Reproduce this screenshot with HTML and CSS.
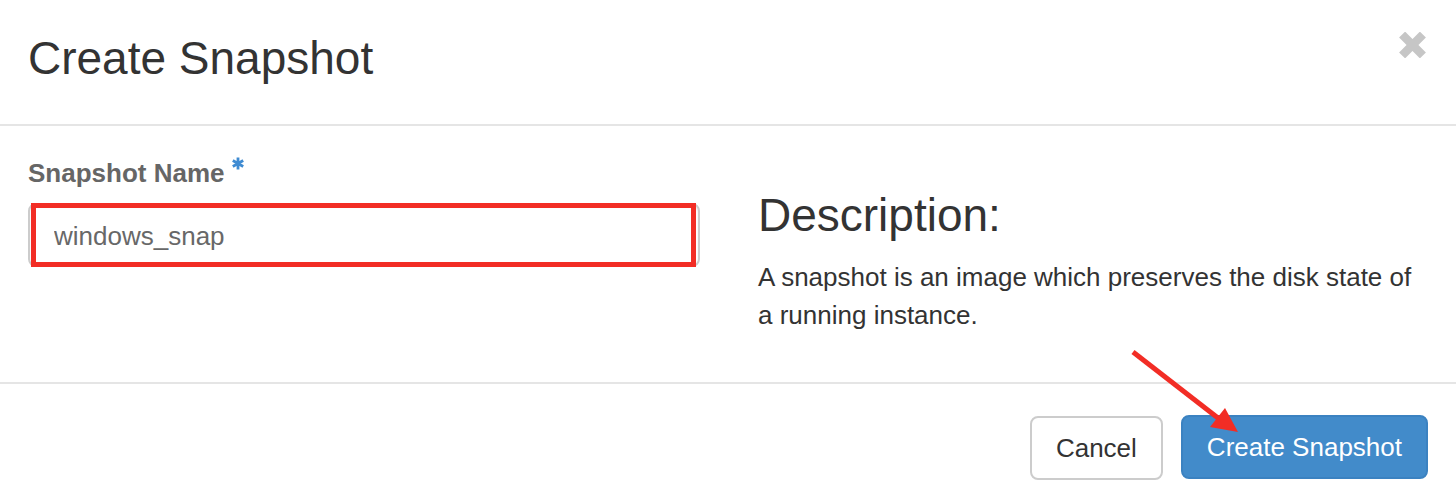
FILE: index.html
```html
<!DOCTYPE html>
<html lang="en">
<head>
<meta charset="utf-8">
<title>Create Snapshot</title>
<link rel="stylesheet" href="styles.css">
</head>
<body>
<div class="modal">
  <div class="modal-header">
    <h4 class="modal-title">Create Snapshot</h4>
    <button class="close" type="button" aria-label="Close">
      <svg width="27" height="26" viewBox="0 0 27 26">
        <path d="M3.1 2.6 L23.9 23.4 M23.9 2.6 L3.1 23.4" stroke="#c6c6c6" stroke-width="8.5" fill="none"/>
      </svg>
    </button>
  </div>
  <div class="modal-body">
    <div class="col">
      <label class="field-label">Snapshot Name
        <svg class="req" width="12" height="13" viewBox="0 0 12 13">
          <path d="M6 0.5 V12.5 M0.8 3.5 L11.2 9.5 M11.2 3.5 L0.8 9.5" stroke="#3f8bd2" stroke-width="2.8" fill="none"/>
        </svg>
      </label>
      <div class="input-wrap">
        <input class="form-control" type="text" value="windows_snap">
        <span class="annot-box"></span>
      </div>
    </div>
    <div class="col">
      <h3 class="desc-title">Description:</h3>
      <p class="desc-text">A snapshot is an image which preserves the disk state of a running instance.</p>
    </div>
  </div>
  <div class="modal-footer">
    <button class="btn btn-default" type="button">Cancel</button>
    <button class="btn btn-primary" type="button">Create Snapshot</button>
  </div>
  <svg class="annot-arrow" width="120" height="95" viewBox="0 0 120 95">
    <path d="M8 7 L93 73" stroke="#f22d25" stroke-width="5" fill="none"/>
    <polygon points="85,82 100,63 113,87" fill="#f22d25"/>
  </svg>
</div>
</body>
</html>
```
FILE: styles.css
```css
* { box-sizing: border-box; }

html, body {
  margin: 0;
  padding: 0;
  background: #ffffff;
}

body {
  font-family: "Liberation Sans", Helvetica, Arial, sans-serif;
  color: #333333;
}

.modal {
  position: relative;
  width: 1456px;
  height: 502px;
  background: #ffffff;
  overflow: hidden;
}

.modal-header {
  display: flex;
  justify-content: space-between;
  align-items: flex-start;
  padding: 33px 30px 41px 28px;
  border-bottom: 2px solid #e5e5e5;
}

.modal-title {
  margin: 0;
  font-size: 46px;
  line-height: 50px;
  font-weight: normal;
  color: #333333;
}

.close {
  display: block;
  margin-top: -1px;
  padding: 0;
  border: 0;
  background: transparent;
  width: 27px;
  height: 26px;
  cursor: pointer;
}
.close svg { display: block; }

.modal-body {
  display: flex;
  gap: 56px;
  padding: 28px 28px 28px 28px;
}

.col {
  flex: 1 1 0;
  min-width: 0;
}

.field-label {
  display: flex;
  align-items: flex-start;
  gap: 7px;
  font-size: 26px;
  line-height: 38px;
  font-weight: bold;
  color: #666666;
  margin-bottom: 11px;
}
.req {
  display: block;
  margin-top: 3px;
}

.input-wrap {
  position: relative;
}

.form-control {
  display: block;
  width: 100%;
  height: 64px;
  margin: 0;
  padding: 2px 24px 0 24px;
  border: 2px solid #cccccc;
  border-radius: 8px;
  box-shadow: inset 0 2px 2px rgba(0, 0, 0, 0.075);
  font-family: "Liberation Sans", Helvetica, Arial, sans-serif;
  font-size: 26px;
  color: #686868;
  background: #ffffff;
  outline: none;
}

.annot-box {
  position: absolute;
  left: 3px;
  right: 4px;
  top: 0;
  bottom: 0;
  border: 5px solid #f22d25;
  pointer-events: none;
}

.desc-title {
  margin: 36px 0 18px 2px;
  font-size: 46px;
  line-height: 50px;
  font-weight: normal;
  color: #333333;
}

.desc-text {
  margin: 0 0 20px 2px;
  font-size: 26px;
  line-height: 38px;
  color: #333333;
}

.modal-footer {
  display: flex;
  justify-content: flex-end;
  align-items: flex-start;
  gap: 18px;
  padding: 32px 28px 20px 28px;
  border-top: 2px solid #e5e5e5;
}

.btn {
  display: inline-block;
  height: 64px;
  padding: 0 24px;
  border: 2px solid transparent;
  border-radius: 8px;
  font-family: "Liberation Sans", Helvetica, Arial, sans-serif;
  font-size: 26px;
  line-height: 60px;
  cursor: pointer;
  white-space: nowrap;
}

.btn-default {
  background: #ffffff;
  border-color: #cccccc;
  color: #333333;
}

.btn-primary {
  margin-top: -1px;
  background: #428bca;
  border-color: #3b82c1;
  color: #ffffff;
}

.annot-arrow {
  position: absolute;
  left: 1125px;
  top: 345px;
  pointer-events: none;
}
```
